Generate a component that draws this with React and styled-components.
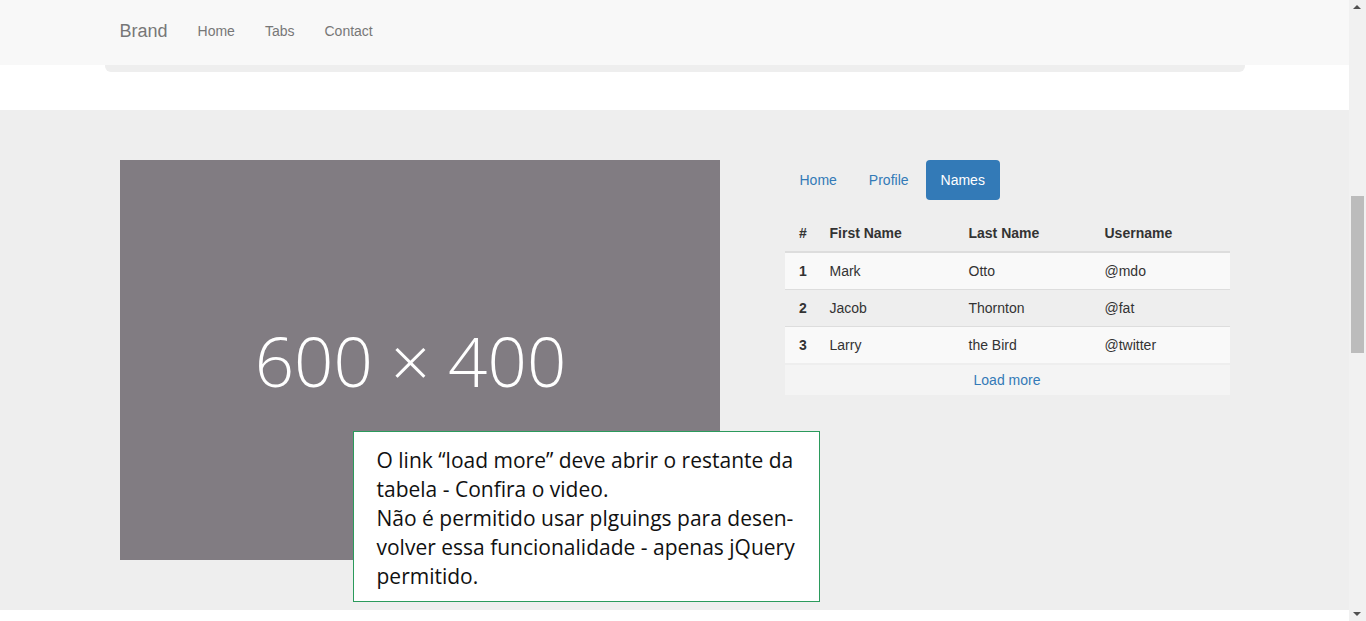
import React, { useLayoutEffect } from 'react';
import styled, { createGlobalStyle } from 'styled-components';

// +++++++++ CSS +++++++++

const GlobalStyle = createGlobalStyle`
	html {
		scrollbar-width: none;
	}
	body {
		margin: 0 17px 0 0;
		padding-top: 70px;
		font-family: "Liberation Sans", Arial, sans-serif;
		font-size: 14px;
		line-height: 20px;
		color: #333;
		background: #fff;
	}
	* {
		box-sizing: border-box;
	}
`;

const Navbar = styled.nav`
	position: fixed;
	top: 0;
	left: 0;
	right: 17px;
	z-index: 10;
	height: 65px;
	background: #f8f8f8;
`;

const NavInner = styled.div`
	width: 1170px;
	margin: 0 auto;
	padding: 0 15px;
	display: flex;
	align-items: flex-start;
`;

const Brand = styled.a`
	padding: 21px 15px;
	font-size: 18px;
	line-height: 20px;
	color: #777;
	text-decoration: none;
`;

const NavLink = styled.a`
	padding: 21px 15px;
	color: #777;
	text-decoration: none;
`;

const Container = styled.div`
	width: 1170px;
	margin: 0 auto;
	padding: 0 15px;
`;

const Jumbotron = styled.div`
	height: 710px;
	margin-bottom: 38px;
	background: #eee;
	border-radius: 0 0 6px 6px;
`;

const Section = styled.section`
	background: #eee;
	padding: 50px 0;
`;

const SectionInner = styled.div`
	position: relative;
	width: 1170px;
	margin: 0 auto;
	padding-left: 30px;
	display: flex;
	align-items: flex-start;
	gap: 65px;
`;

const Placeholder = styled.div`
	width: 600px;
	height: 400px;
	flex: none;
	padding-right: 18px;
	background: #817c82;
	color: #fff;
	display: flex;
	align-items: center;
	justify-content: center;
	font-family: "Open Sans", "Liberation Sans", sans-serif;
	font-weight: 300;
	font-size: 69px;
	line-height: 1;
`;

const Side = styled.div`
	width: 445px;
	flex: none;
`;

const Pills = styled.ul`
	list-style: none;
	margin: 0;
	padding: 0;
	display: flex;
	gap: 2px;
`;

const Pill = styled.li`
	padding: 10px 15px;
	border-radius: 4px;
	color: ${p => (p.active ? '#fff' : '#337ab7')};
	background: ${p => (p.active ? '#337ab7' : 'transparent')};
`;

const Table = styled.table`
	width: 100%;
	margin-top: 15px;
	border-collapse: collapse;
	border-spacing: 0;
`;

const Th = styled.th`
	padding: 8px;
	text-align: ${p => (p.center ? 'center' : 'left')};
	font-weight: bold;
	border-bottom: 2px solid #ddd;
	width: ${p => p.w}px;
`;

const Row = styled.tr`
	background: ${p => (p.striped ? '#f9f9f9' : 'transparent')};
`;

const Td = styled.td`
	padding: 8px;
	border-top: 1px solid #ddd;
	text-align: ${p => (p.center ? 'center' : 'left')};
	font-weight: ${p => (p.bold ? 'bold' : 'normal')};
`;

const LoadMore = styled.div`
	margin-top: 2px;
	height: 30px;
	line-height: 30px;
	text-align: center;
	background: #f4f4f4;
	color: #337ab7;
`;

const Note = styled.div`
	position: absolute;
	left: 263px;
	top: 271px;
	width: 467px;
	height: 171px;
	padding: 14px 0 0 23px;
	background: #fff;
	border: 1px solid #2b9a5c;
	font-family: "Open Sans", "Liberation Sans", sans-serif;
	font-size: 21px;
	line-height: 29px;
	color: #111;
	white-space: nowrap;
`;

const NoteLine = styled.div``;

const Below = styled.div`
	height: 1004px;
`;

// fake browser scrollbar, drawn over the right edge
const Scrollbar = styled.div`
	position: fixed;
	top: 0;
	right: 0;
	width: 17px;
	height: 100%;
	background: #f1f1f1;
	z-index: 20;
`;

const Arrow = styled.div`
	position: absolute;
	left: 4px;
	${p => (p.down ? 'bottom: 5px;' : 'top: 5px;')}
	width: 0;
	height: 0;
	border-left: 4px solid transparent;
	border-right: 4px solid transparent;
	${p => (p.down ? 'border-top: 4px solid #505050;' : 'border-bottom: 4px solid #505050;')}
`;

const Thumb = styled.div`
	position: absolute;
	left: 2px;
	top: 196px;
	width: 13px;
	height: 157px;
	background: #bcbcbc;
`;

const people = [
	{ id: 1, first: 'Mark', last: 'Otto', user: '@mdo' },
	{ id: 2, first: 'Jacob', last: 'Thornton', user: '@fat' },
	{ id: 3, first: 'Larry', last: 'the Bird', user: '@twitter' },
];

const noteLines = [
	'O link “load more” deve abrir o restante da',
	'tabela - Confira o video.',
	'Não é permitido usar plguings para desen-',
	'volver essa funcionalidade - apenas jQuery',
	'permitido.',
];

export default function App() {
	useLayoutEffect(() => {
		window.scrollTo(0, 708);
	}, []);

	return (
		<>
			<GlobalStyle />
			<Navbar>
				<NavInner>
					<Brand>Brand</Brand>
					<NavLink>Home</NavLink>
					<NavLink>Tabs</NavLink>
					<NavLink>Contact</NavLink>
				</NavInner>
			</Navbar>
			<Container>
				<Jumbotron />
			</Container>
			<Section>
				<SectionInner>
					<Placeholder>600 × 400</Placeholder>
					<Side>
						<Pills>
							<Pill>Home</Pill>
							<Pill>Profile</Pill>
							<Pill active>Names</Pill>
						</Pills>
						<Table>
							<thead>
								<tr>
									<Th center w={37}>#</Th>
									<Th w={139}>First Name</Th>
									<Th w={136}>Last Name</Th>
									<Th>Username</Th>
								</tr>
							</thead>
							<tbody>
								{people.map(p => (
									<Row key={p.id} striped={p.id % 2 === 1}>
										<Td center bold>{p.id}</Td>
										<Td>{p.first}</Td>
										<Td>{p.last}</Td>
										<Td>{p.user}</Td>
									</Row>
								))}
							</tbody>
						</Table>
						<LoadMore>Load more</LoadMore>
					</Side>
					<Note>
						{noteLines.map(line => <NoteLine key={line}>{line}</NoteLine>)}
					</Note>
				</SectionInner>
			</Section>
			<Below />
			<Scrollbar>
				<Arrow />
				<Thumb />
				<Arrow down />
			</Scrollbar>
		</>
	);
}
